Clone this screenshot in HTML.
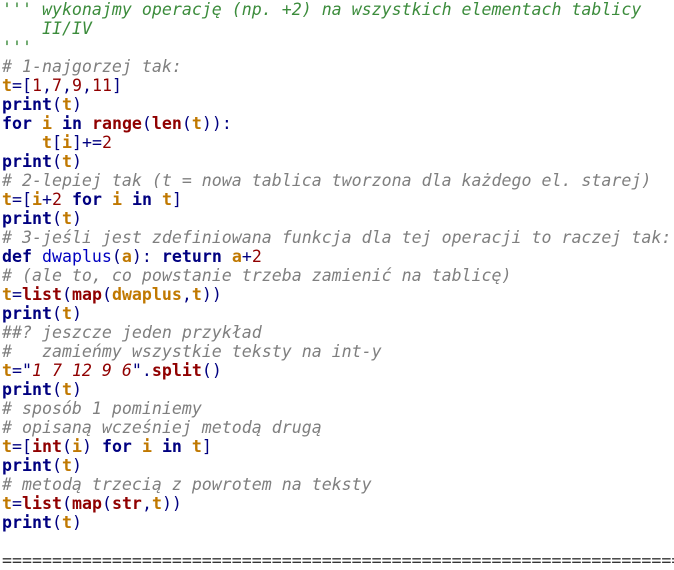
<!DOCTYPE html><html><head><style>
body{margin:0;background:#fff;width:674px;height:566px;overflow:hidden}
pre{margin:0;padding:0 0 0 2px;font-family:"DejaVu Sans Mono","Liberation Mono",monospace;font-size:16.6px;line-height:19px;color:#000080;white-space:pre}
.d{color:#3c8c3c;font-style:italic}
.c{color:#7f7f7f;font-style:italic}
.k{color:#000080;font-weight:bold}
.b{color:#900000;font-weight:bold}
.v{color:#c07800;font-weight:bold}
.n{color:#900000}
.s{color:#900000;font-style:italic}
.f{color:#0000c0}
.e{color:#333}
</style></head><body><pre><span class="d">''' wykonajmy operację (np. +2) na wszystkich elementach tablicy
    II/IV
'''</span>
<span class="c"># 1-najgorzej tak:</span>
<span class="v">t</span>=[<span class="n">1</span>,<span class="n">7</span>,<span class="n">9</span>,<span class="n">11</span>]
<span class="k">print</span>(<span class="v">t</span>)
<span class="k">for</span> <span class="v">i</span> <span class="k">in</span> <span class="b">range</span>(<span class="b">len</span>(<span class="v">t</span>)):
    <span class="v">t</span>[<span class="v">i</span>]+=<span class="n">2</span>
<span class="k">print</span>(<span class="v">t</span>)
<span class="c"># 2-lepiej tak (t = nowa tablica tworzona dla każdego el. starej)</span>
<span class="v">t</span>=[<span class="v">i</span>+<span class="n">2</span> <span class="k">for</span> <span class="v">i</span> <span class="k">in</span> <span class="v">t</span>]
<span class="k">print</span>(<span class="v">t</span>)
<span class="c"># 3-jeśli jest zdefiniowana funkcja dla tej operacji to raczej tak:</span>
<span class="k">def</span> <span class="f">dwaplus</span>(<span class="v">a</span>): <span class="k">return</span> <span class="v">a</span>+<span class="n">2</span>
<span class="c"># (ale to, co powstanie trzeba zamienić na tablicę)</span>
<span class="v">t</span>=<span class="b">list</span>(<span class="b">map</span>(<span class="v">dwaplus</span>,<span class="v">t</span>))
<span class="k">print</span>(<span class="v">t</span>)
<span class="c">##? jeszcze jeden przykład</span>
<span class="c">#   zamieńmy wszystkie teksty na int-y</span>
<span class="v">t</span>="<span class="s">1 7 12 9 6</span>".<span class="b">split</span>()
<span class="k">print</span>(<span class="v">t</span>)
<span class="c"># sposób 1 pominiemy</span>
<span class="c"># opisaną wcześniej metodą drugą</span>
<span class="v">t</span>=[<span class="b">int</span>(<span class="v">i</span>) <span class="k">for</span> <span class="v">i</span> <span class="k">in</span> <span class="v">t</span>]
<span class="k">print</span>(<span class="v">t</span>)
<span class="c"># metodą trzecią z powrotem na teksty</span>
<span class="v">t</span>=<span class="b">list</span>(<span class="b">map</span>(<span class="b">str</span>,<span class="v">t</span>))
<span class="k">print</span>(<span class="v">t</span>)

<span class="e">======================================================================</span></pre></body></html>
